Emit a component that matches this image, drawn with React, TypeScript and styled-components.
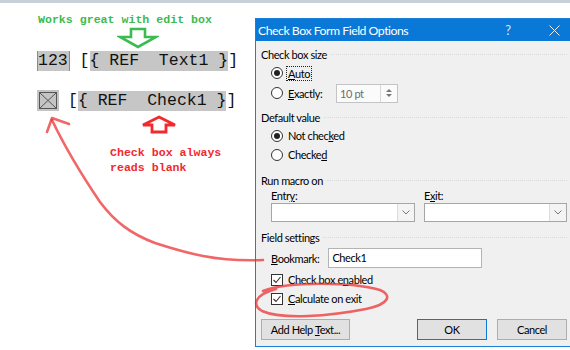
import React from "react";
import styled, { createGlobalStyle } from "styled-components";

const GlobalStyle = createGlobalStyle`
  html, body {
    margin: 0;
    padding: 0;
    background: #ffffff;
  }
  body {
    font-family: Lato, "Noto Sans", "Liberation Sans", sans-serif;
  }
`;

const Page = styled.div`
  position: relative;
  width: 570px;
  height: 350px;
  box-sizing: border-box;
  border-top: 3px solid #c9cfd8;
  background: #ffffff;
  overflow: hidden;
  display: flex;
  align-items: flex-start;
`;

/* ---------- left side: the word document notes ---------- */

const Notes = styled.div`
  width: 255px;
  flex-shrink: 0;
  display: flex;
  flex-direction: column;
`;

const Caption = styled.div<{ $color: string; $mt: number }>`
  margin: ${(p) => p.$mt}px 0 0 ${(p) => (p.$color === "green" ? 38 : 110)}px;
  font-family: "Liberation Mono", "DejaVu Sans Mono", monospace;
  font-size: 11.6px;
  font-weight: bold;
  line-height: 15px;
  color: ${(p) => (p.$color === "green" ? "#3bbb50" : "#f2292e")};
  white-space: pre;
`;

const ArrowBox = styled.svg<{ $ml: number; $mt: number }>`
  display: block;
  margin: ${(p) => p.$mt}px 0 0 ${(p) => p.$ml}px;
`;

const FieldRow = styled.div<{ $mt: number }>`
  display: flex;
  align-items: center;
  height: 21px;
  margin: ${(p) => p.$mt}px 0 0 37px;
  font-family: "Liberation Mono", "DejaVu Sans Mono", monospace;
  font-size: 16.5px;
  color: #111;
  white-space: pre;
`;

const NumField = styled.span`
  height: 20px;
  line-height: 20px;
  padding: 0 1px 0 0;
  background: #c6c6c6;
  border-left: 1px solid #8a8a8a;
  border-right: 1px solid #8a8a8a;
`;

const Shade = styled.span`
  height: 20px;
  line-height: 20px;
  background: #c6c6c6;
`;

const Bracket = styled.span<{ $ml?: number }>`
  margin-left: ${(p) => p.$ml ?? 0}px;
  line-height: 20px;
`;

/* ---------- right side: the dialog ---------- */

const Dialog = styled.div`
  flex-shrink: 0;
  width: 323px;
  height: 329px;
  margin-top: 15px;
  box-sizing: border-box;
  border: 1px solid #1a7fd6;
  background: #f0f0f0;
  display: flex;
  flex-direction: column;
  font-size: 11px;
  letter-spacing: -0.4px;
  color: #000;
`;

const TitleBar = styled.div`
  height: 22px;
  background: #0a78d7;
  color: #ffffff;
  display: flex;
  align-items: center;
  padding-left: 2px;
  font-size: 12.3px;
  letter-spacing: -0.5px;
`;

const Title = styled.span`
  flex: 1;
`;

const TitleButton = styled.span<{ $w: number }>`
  width: ${(p) => p.$w}px;
  display: flex;
  justify-content: center;
  align-items: center;
  color: #d8e8f7;
  font-size: 13px;
`;

const Body = styled.div`
  flex: 1;
  padding: 5px 10px 5px 5px;
  display: flex;
  flex-direction: column;
`;

const GroupHead = styled.div<{ $mt: number }>`
  height: 16px;
  margin-top: ${(p) => p.$mt}px;
  display: flex;
  align-items: center;
  gap: 4px;
  &::after {
    content: "";
    flex: 1;
    border-top: 1px dotted #dadada;
    margin-top: 1px;
  }
`;

const Row = styled.div<{ $h: number; $mt?: number }>`
  height: ${(p) => p.$h}px;
  margin-top: ${(p) => p.$mt ?? 0}px;
  padding-left: 10px;
  display: flex;
  align-items: center;
`;

const Radio = styled.span<{ $on?: boolean }>`
  width: 12px;
  height: 12px;
  box-sizing: border-box;
  border-radius: 50%;
  border: 1px solid #333;
  background: #fff;
  margin-right: 3px;
  display: flex;
  align-items: center;
  justify-content: center;
  &::after {
    content: "";
    width: 6px;
    height: 6px;
    border-radius: 50%;
    background: ${(p) => (p.$on ? "#222" : "transparent")};
  }
`;

const Label = styled.span<{ $focus?: boolean; $w?: number }>`
  ${(p) => (p.$w ? `width: ${p.$w}px;` : "")}
  padding: 0 1px;
  line-height: 13px;
  border: 1px dotted ${(p) => (p.$focus ? "#222" : "transparent")};
  white-space: pre;
`;

const Spin = styled.div<{ $w: number }>`
  width: ${(p) => p.$w}px;
  height: 19px;
  box-sizing: border-box;
  border: 1px solid #c4c4c4;
  background: #fbfbfb;
  display: flex;
  color: #6d6d6d;
`;

const SpinText = styled.span`
  flex: 1;
  padding-left: 3px;
  line-height: 17px;
`;

const SpinButtons = styled.div`
  width: 16px;
  border-left: 1px solid #d8d8d8;
  display: flex;
  flex-direction: column;
  align-items: center;
  justify-content: center;
  gap: 2px;
`;

const Tri = styled.span<{ $up?: boolean }>`
  width: 0;
  height: 0;
  border-left: 3px solid transparent;
  border-right: 3px solid transparent;
  ${(p) => (p.$up ? "border-bottom" : "border-top")}: 3px solid #777;
`;

const Columns = styled.div<{ $h: number; $mt?: number }>`
  height: ${(p) => p.$h}px;
  margin-top: ${(p) => p.$mt ?? 0}px;
  padding-left: 10px;
  display: grid;
  grid-template-columns: 144px 1fr;
  column-gap: 9px;
  align-items: center;
`;

const Combo = styled.div`
  height: 19px;
  box-sizing: border-box;
  border: 1px solid #a6a6a6;
  background: #ffffff;
  display: flex;
  justify-content: flex-end;
`;

const ComboButton = styled.div`
  width: 16px;
  border-left: 1px solid #dcdcdc;
  background: #f4f4f4;
  display: flex;
  align-items: center;
  justify-content: center;
`;

const TextBox = styled.div<{ $w: number; $ml: number }>`
  width: ${(p) => p.$w}px;
  height: 20px;
  margin-left: ${(p) => p.$ml}px;
  box-sizing: border-box;
  border: 1px solid #b4b4b4;
  background: #ffffff;
  padding-left: 3px;
  line-height: 18px;
`;

const Check = styled.span`
  width: 12px;
  height: 12px;
  box-sizing: border-box;
  border: 1px solid #333;
  background: #fff;
  margin-right: 3px;
  display: flex;
  align-items: center;
  justify-content: center;
`;

const Buttons = styled.div`
  height: 21px;
  margin-top: 11px;
  display: flex;
  align-items: stretch;
  gap: 10px;
`;

const Button = styled.button<{ $w: number; $default?: boolean; $push?: boolean }>`
  width: ${(p) => p.$w}px;
  ${(p) => (p.$push ? "margin-left: auto;" : "")}
  box-sizing: border-box;
  border: 1px solid ${(p) => (p.$default ? "#0a78d7" : "#adadad")};
  background: #e1e1e1;
  font: inherit;
  letter-spacing: inherit;
  color: #000;
  padding: 0;
  white-space: pre;
`;

const Overlay = styled.svg`
  position: absolute;
  left: 0;
  top: -3px;
  pointer-events: none;
`;

const Chevron = () => (
  <svg width="8" height="5" viewBox="0 0 8 5">
    <path d="M0.5 0.5 L4 4 L7.5 0.5" fill="none" stroke="#777" strokeWidth="1" />
  </svg>
);

const Tick = () => (
  <svg width="10" height="10" viewBox="0 0 10 10">
    <path d="M1.5 5 L4 7.5 L8.5 2" fill="none" stroke="#333" strokeWidth="1.1" />
  </svg>
);

export default function App() {
  return (
    <Page>
      <GlobalStyle />
      <Notes>
        <Caption $color="green" $mt={9}>Works great with edit box</Caption>
        <ArrowBox $ml={117} $mt={0} width="42" height="22" viewBox="0 0 42 22">
          <path
            d="M14 2 H28 V10 H39 L21 20 L3 10 H14 Z"
            fill="#fff"
            stroke="#3bbb50"
            strokeWidth="2.6"
            strokeLinejoin="miter"
          />
        </ArrowBox>
        <FieldRow $mt={1}>
          <NumField>123</NumField>
          <Bracket> [</Bracket>
          <Shade>{"{ REF  Text1 }"}</Shade>
          <Bracket>]</Bracket>
        </FieldRow>
        <FieldRow $mt={19}>
          <svg width="22" height="21" viewBox="0 0 22 21">
            <rect x="0" y="0" width="22" height="21" fill="#c4c4c4" />
            <rect x="2.5" y="2.5" width="17" height="16" fill="none" stroke="#555" strokeWidth="1" />
            <path d="M2.5 2.5 L19.5 18.5 M19.5 2.5 L2.5 18.5" stroke="#555" strokeWidth="1" />
          </svg>
          <Bracket $ml={9}>[</Bracket>
          <Shade>{"{ REF  Check1 }"}</Shade>
          <Bracket>]</Bracket>
        </FieldRow>
        <ArrowBox $ml={140} $mt={4} width="38" height="19" viewBox="0 0 38 19">
          <path
            d="M19 2 L35 10 H26 V17 H12 V10 H3 Z"
            fill="#fff"
            stroke="#f2292e"
            strokeWidth="2.8"
          />
        </ArrowBox>
        <Caption $color="red" $mt={11}>{"Check box always\nreads blank"}</Caption>
      </Notes>

      <Dialog>
        <TitleBar>
          <Title>Check Box Form Field Options</Title>
          <TitleButton $w={46}>?</TitleButton>
          <TitleButton $w={46}>
            <svg width="11" height="11" viewBox="0 0 11 11">
              <path d="M0.5 0.5 L10.5 10.5 M10.5 0.5 L0.5 10.5" stroke="#e6f0fa" strokeWidth="1" />
            </svg>
          </TitleButton>
        </TitleBar>
        <Body>
          <GroupHead $mt={0}>Check box size</GroupHead>
          <Row $h={20} $mt={1}>
            <Radio $on />
            <Label $focus>
              <u>A</u>uto
            </Label>
          </Row>
          <Row $h={20}>
            <Radio />
            <Label $w={46}>
              <u>E</u>xactly:
            </Label>
            <Spin $w={62}>
              <SpinText>10 pt</SpinText>
              <SpinButtons>
                <Tri $up />
                <Tri />
              </SpinButtons>
            </Spin>
          </Row>

          <GroupHead $mt={6}>Default value</GroupHead>
          <Row $h={19} $mt={1}>
            <Radio $on />
            <Label>
              Not chec<u>k</u>ed
            </Label>
          </Row>
          <Row $h={19}>
            <Radio />
            <Label>
              Checke<u>d</u>
            </Label>
          </Row>

          <GroupHead $mt={8}>Run macro on</GroupHead>
          <Columns $h={15}>
            <span>
              Entr<u>y</u>:
            </span>
            <span>
              E<u>x</u>it:
            </span>
          </Columns>
          <Columns $h={19}>
            <Combo>
              <ComboButton>
                <Chevron />
              </ComboButton>
            </Combo>
            <Combo>
              <ComboButton>
                <Chevron />
              </ComboButton>
            </Combo>
          </Columns>

          <GroupHead $mt={7}>Field settings</GroupHead>
          <Row $h={22} $mt={2}>
            <span>
              <u>B</u>ookmark:
            </span>
            <TextBox $w={154} $ml={9}>Check1</TextBox>
          </Row>
          <Row $h={19} $mt={1}>
            <Check>
              <Tick />
            </Check>
            <Label>
              Check box e<u>n</u>abled
            </Label>
          </Row>
          <Row $h={19}>
            <Check>
              <Tick />
            </Check>
            <Label>
              <u>C</u>alculate on exit
            </Label>
          </Row>

          <Buttons>
            <Button $w={89}>
              Add Help <u>T</u>ext...
            </Button>
            <Button $w={70} $default $push>
              OK
            </Button>
            <Button $w={70}>Cancel</Button>
          </Buttons>
        </Body>
      </Dialog>

      <Overlay width="570" height="350" viewBox="0 0 570 350">
        <g fill="none" stroke="#ec2b2b" strokeOpacity="0.72" strokeWidth="2.6" strokeLinecap="round" strokeLinejoin="round">
          <path d="M52 120 C62 141 79 171 100 202 C115 222 131 234 155 243 C186 253 216 262 263 260" />
          <path d="M47 132 L52 118 L69 124" />
          <path d="M263 291 C290 281 352 282 380 290 C392 295 390 304 366 309 C330 316 282 320 262 311 C252 305 254 295 276 289" />
        </g>
      </Overlay>
    </Page>
  );
}
